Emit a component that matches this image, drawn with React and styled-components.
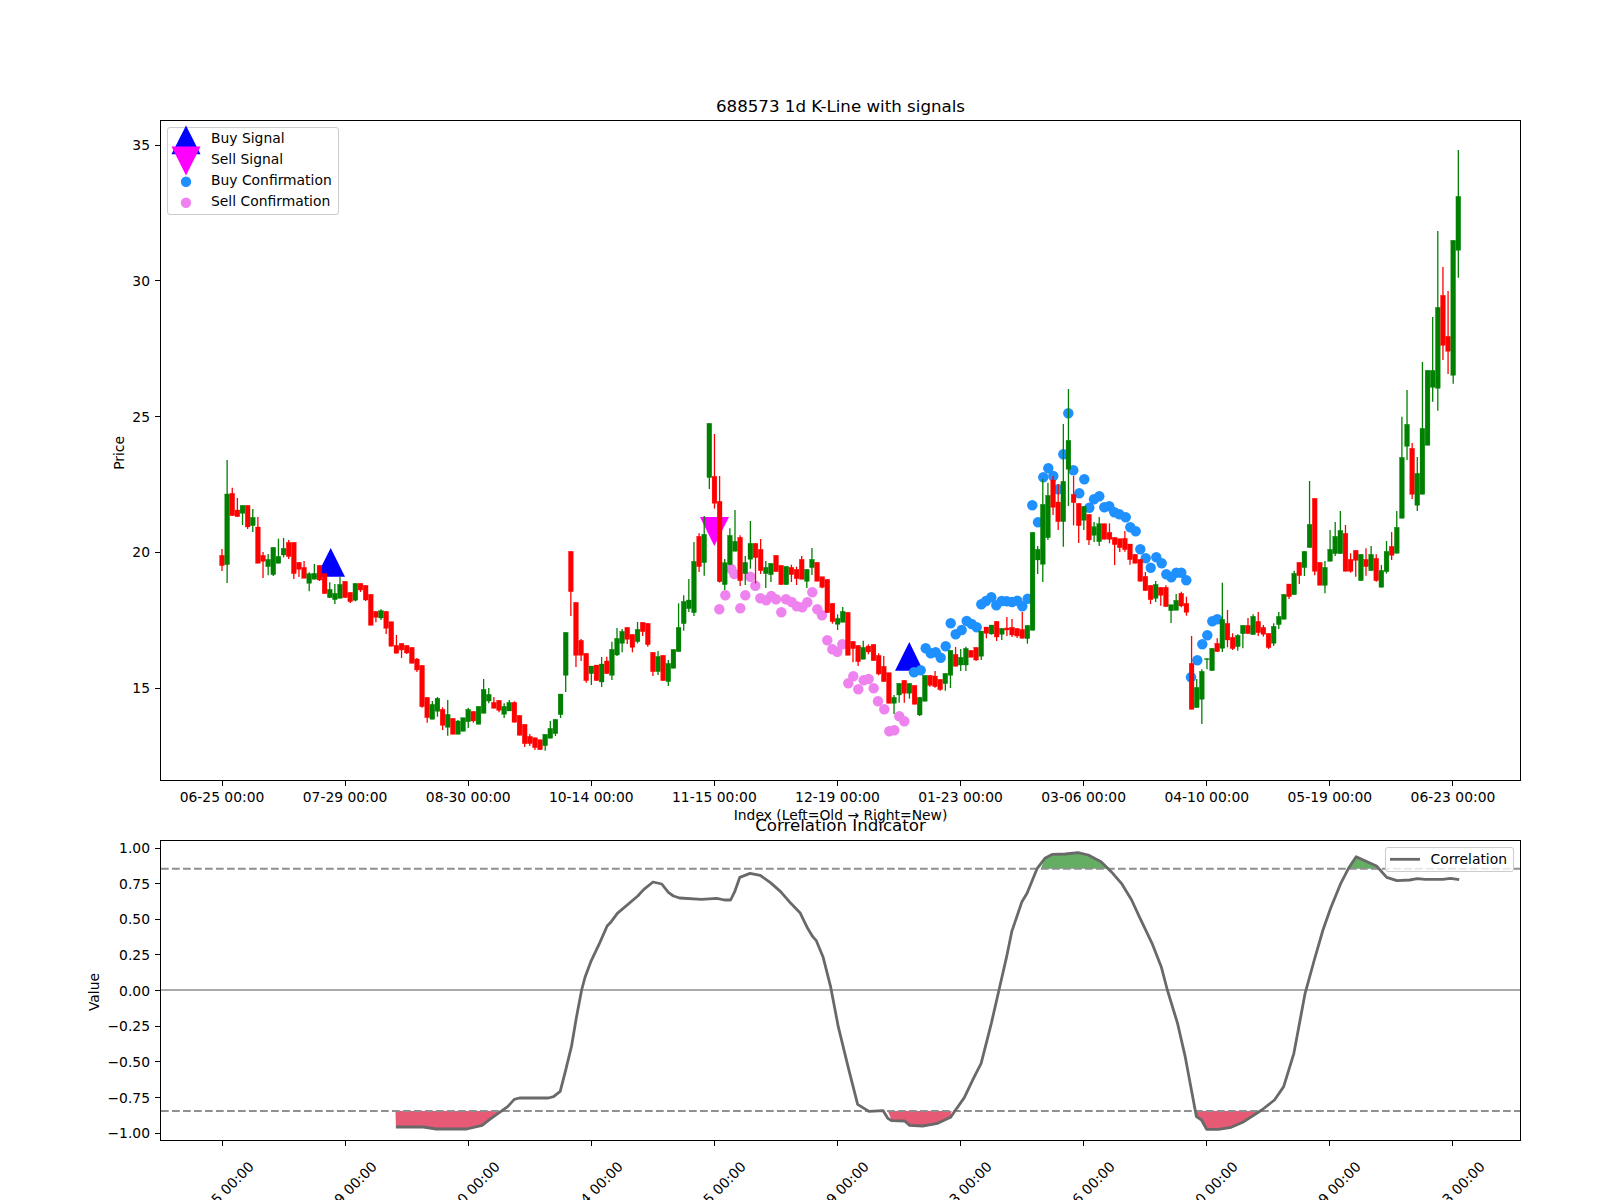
import React from 'react';
import styled, { createGlobalStyle } from 'styled-components';

const GlobalStyle = createGlobalStyle`
  html, body {
    margin: 0;
    background: #fff;
  }

  body {
    width: 1600px;
    height: 1200px;
    overflow: hidden;
    font-family: 'DejaVu Sans', sans-serif;
    color: #000;
  }
`;

// rows: colour, body top, body bottom, wick top, wick bottom (thirds of a pixel below `top`)
const candleGroups = [
  { top: 430, rows: [
    ['r',376,407,357,423],['g',192,404,90,459],['r',190,257,173,257],['r',240,260,204,260],
    ['g',226,250,226,285],['r',226,291,226,297],['g',262,287,237,306],['r',291,400,261,400],
    ['r',376,394,366,444],['g',388,410,372,436],['g',352,434,352,438],['g',379,400,326,400],
    ['g',355,375,324,382],['r',337,380,330,387],['r',337,431,337,447],['r',397,418,397,441],
    ['r',412,445,393,445],['g',431,460,427,484],['g',430,448,402,448],['r',406,450,406,453],
    ['r',431,491],['g',478,503,457,503],['g',490,509,462,522],['g',463,505,440,505],
    ['r',454,503],['r',487,515,487,519],['g',460,511,460,514],['r',460,480,460,486],
    ['r',466,510,466,513],
  ] },
  { top: 590, rows: [
    ['r',13,106],['r',64,82,64,97],['g',62,84,58,90],['r',64,115,64,132],['r',95,169],
    ['r',166,190,135,190],['r',160,180,160,204],['r',166,189,166,192],['r',172,220],
    ['r',207,240,204,246],
  ] },
  { top: 530, rows: [
    ['r',406,530,406,533],['r',502,563,502,578],['g',523,568,513,568],['g',505,544,501,560],
    ['r',538,586,532,600],['g',553,592,510,617],['r',565,613],['g',573,613,570,613],
    ['g',563,604],['g',538,575,533,594],['r',544,573,544,578],['g',529,583],
    ['g',478,550,447,550],['g',493,513,474,520],['r',517,535,501,535],['r',511,541,511,547],
    ['g',529,553,520,564],['g',517,543,510,543],['r',517,577,514,577],['r',556,616],
    ['r',583,641,583,651],['r',619,641,612,648],['r',623,653,623,660],['r',629,659],
    ['g',613,647,613,662],['g',595,625,573,625],['g',568,611,568,618],['g',492,554,492,564],
    ['g',307,436,307,486],['r',64,185,64,258],['r',217,376,217,411],['r',331,376,327,393],
    ['r',370,452,370,458],['g',408,431,408,465],['r',405,452],['g',402,456,381,471],
    ['r',393,431,380,431],['g',358,436,335,450],['g',325,375,294,378],['g',304,340,297,367],
    ['r',292,328,292,342],['r',313,352,313,367],['g',298,335,276,340],
  ] },
  { top: 410, rows: [
    ['r',637,665,637,678],['r',640,704,640,710],['r',727,785,727,798],['g',739,785,723,795],
    ['r',736,812],['g',760,815,750,828],['g',718,775],['g',652,725,580,725],
    ['g',574,641,556,662],['g',570,596,507,606],['g',454,608,396,618],['r',379,470,370,486],
    ['g',373,458,318,497],['g',40,203,40,237],['r',199,280,72,296],['r',274,515,198,518],
    ['g',458,524,447,540],['g',376,464,355,466],['g',394,424,300,424],['r',382,512,376,528],
    ['g',457,491,438,525],['g',400,448,333,476],['r',400,443,400,520],['r',418,482,387,492],
    ['g',472,491,453,534],['g',460,494,460,516],['r',436,485],['r',466,524],['g',469,524],
    ['r',472,494,464,516],['r',478,506,470,525],['r',448,508,438,508],['g',478,514,478,534],
    ['g',448,473,414,495],['r',457,514],['r',500,532,500,535],['r',508,608],
    ['r',580,635,580,641],['g',625,643,613,660],['g',604,637,591,637],['r',607,736],
    ['r',694,716,694,757],['r',706,755,706,768],['g',712,748,692,748],['r',708,726,703,733],
    ['r',703,752],['r',736,792,730,796],
  ] },
  { top: 540, rows: [
    ['r',379,425,348,425],['r',398,490],['g',472,490,465,522],['g',430,465,430,488],
    ['r',421,460,421,488],['g',430,460,430,476],['r',436,493],['g',472,525,472,528],
    ['g',406,484],['r',406,436,406,440],['r',408,440,393,443],['r',418,449,418,452],
    ['g',400,431,400,452],['g',331,406,331,444],['r',343,379,321,379],['g',352,375,327,393],
    ['g',325,375,320,393],['r',331,352],['r',322,360,322,363],['g',273,349,273,360],
    ['r',261,280,261,295],['g',255,282,255,284],['r',244,291,244,303],['g',265,283,265,300],
    ['r',264,270,231,288],['r',262,285,237,291],['r',265,288,265,294],['r',268,295,216,295],
    ['g',256,296,256,311],
  ] },
  { top: 380, rows: [
    ['g',457,751],['g',508,540,498,582],['g',373,553,297,606],['g',346,473,308,480],
    ['r',300,382,288,405],['r',366,425,312,450],['g',304,425,132,500],['g',181,268,27,378],
    ['r',343,368,288,436],['r',370,437,370,489],['g',379,421,379,450],['r',403,480,403,495],
    ['g',440,466,426,486],['g',431,485,411,498],['r',431,478],['r',457,478,430,490],
    ['r',472,494,472,555],['r',476,503,476,516],['r',475,509,453,515],['r',492,539,492,554],
    ['r',523,550],['r',538,604],['r',589,632,576,632],['r',616,659,616,672],
    ['g',613,655,603,666],['r',622,646,622,677],['r',622,680,616,680],['g',674,692,674,729],
    ['g',661,691,642,691],['r',640,678,635,682],['r',670,697,650,707],
  ] },
  { top: 560, rows: [
    ['r',310,448,228,448],['g',382,443,357,443],['g',334,418,328,492],['g',296,299,295,328],
    ['g',265,332],['r',250,275,235,275],['g',178,265,68,276],['r',190,240,150,262],
    ['r',232,266,220,270],['g',226,260,223,272],['g',196,221,196,265],['r',196,221,174,221],
    ['g',169,224,163,224],['r',184,218,156,228],['r',202,223,195,230],['r',220,263,220,267],
    ['g',199,250,190,258],['g',169,194,156,207],
  ] },
  { top: 480, rows: [
    ['g',343,418],['r',312,350,312,357],['g',280,344,272,344],['r',247,287,247,312],
    ['g',214,263,214,288],['g',133,203,3,203],['r',55,274,55,286],['r',247,316],
    ['g',262,316,243,340],['g',208,244,150,244],['g',169,221,126,228],['g',151,221,93,221],
  ] },
  { top: 140, rows: [
    ['r',1180,1294,1155,1294],['r',1258,1294,1240,1298],['r',1231,1261,1231,1310],
    ['g',1243,1322],['r',1258,1280,1225,1307],['g',1243,1292,1218,1292],['r',1255,1322,1243,1325],
    ['g',1291,1342,1275,1342],['g',1234,1295,1203,1301],['r',1219,1246,1176,1260],
    ['g',1162,1240,1113,1240],['g',952,1135,830,1135],['g',853,919,750,960],['r',925,1063,909,1077],
    ['g',1000,1096,951,1113],['g',865,1063,666,1063],['g',691,916],['g',691,742,531,785],
    ['g',502,745,273,812],['r',466,616,381,660],['r',589,634,453,702],['g',301,706,301,731],
    ['g',169,331,30,413],
  ] },
];

const candles = candleGroups
  .flatMap(({ top, rows }) =>
    rows.map(([colour, bodyTop, bodyBottom, wickTop = bodyTop, wickBottom = bodyBottom]) => ({
      colour: colour === 'r' ? '#ff0000' : '#008000',
      bodyTop: top + bodyTop / 3,
      bodyBottom: top + bodyBottom / 3,
      wickTop: top + wickTop / 3,
      wickBottom: top + wickBottom / 3,
    })),
  )
  .map((candle, index) => ({ ...candle, x: 222 + 5.13 * index }));

const sellDots = [
  [719.3,609.3],[725.3,595.3],[731.3,569],[734.3,574],[740.3,608.3],[745.3,595.3],[750.3,576.7],
  [755.3,585.7],[760.3,598.3],[766.3,600.3],[771.3,596],[776,599.3],[781.3,612.3],[786,599.3],
  [791.7,602],[796.7,606.3],[802.3,607.3],[807.3,602.3],[812.3,592.3],[817.3,609.3],[822,615.3],
  [827.3,640.3],[832.3,649.3],[837.3,651.7],[842.3,644.3],[848.3,683.3],[853.3,676.3],[858.3,689.3],
  [863.7,680.3],[868.7,679],[873.7,688.3],[878,701.3],[884.3,709.3],[889.3,731.3],[894.3,730.3],
  [899.3,716.3],[904.3,721.3],
];

const buyDots = [
  [914,672.3],[920.7,670.3],[925.7,648.3],[930.7,653.3],[935.7,652.3],[940.7,657.7],[945.7,646.3],
  [950.7,623.3],[955.7,634.3],[961.7,630],[966.7,621],[971.7,624],[976.7,627.3],[981.3,604.3],
  [986,601],[991.3,597.3],[996.3,605.3],[1001.7,601],[1006.7,601.3],[1012,602],[1017.3,600.7],
  [1022.3,606.3],[1027.7,598.7],[1032.3,505.3],[1038,522.3],[1043.3,477.3],[1048.3,468.3],
  [1053.3,476],[1058.3,489.3],[1063.3,454.3],[1068.3,413.3],[1073.3,470.3],[1079.3,493.3],
  [1084.3,479.3],[1089.3,507.7],[1094,499.3],[1099.3,496.3],[1104.3,507.3],[1109.3,506.3],
  [1114.3,512.3],[1119.3,514.3],[1125.7,517.3],[1130.3,527.3],[1135.7,531.3],[1140.3,549.3],
  [1145.7,558.3],[1150.7,567.7],[1156.3,557.3],[1161.7,563.3],[1166.3,574.3],[1171.3,577.3],
  [1176.3,572.7],[1181.3,572.7],[1186.3,580.3],[1191,677.3],[1197.3,660.3],[1202.3,644.3],
  [1207.3,635.3],[1212.3,621.3],[1217.3,619.3],
];

const oldHalf = [
  [776,1101],[800,1101],[830,1101],[855,1107],[915,1107],[945,1096],[960,1078],[995,1040],[1008,1018],
  [1018,1014],[1075,1014],[1085,1010],[1098,994],[1108,935],[1120,860],[1130,770],[1140,690],[1147,650],
  [1158,605],[1175,550],[1190,498],[1198,485],[1210,460],[1250,408],[1262,388],[1280,366],[1297,372],
  [1310,397],[1320,408],[1332,414],[1375,418],[1405,415],[1420,420],[1432,420],[1440,395],[1450,352],
  [1470,340],[1490,346],[1510,368],[1530,395],[1550,430],
];

const newHalf = [
  [0,458],[15,505],[25,530],[32,542],[45,590],[60,680],[75,800],[95,925],[113,1033],[135,1054],[163,1052],
  [172,1075],[180,1082],[205,1083],[215,1096],[240,1098],[270,1090],[295,1072],[305,1050],[322,1013],
  [340,955],[355,910],[375,790],[390,690],[405,590],[415,515],[435,425],[445,400],[465,325],[480,295],
  [495,283],[520,282],[545,278],[565,285],[590,305],[610,335],[630,370],[650,420],[665,470],[690,550],
  [708,620],[720,690],[740,790],[755,890],[777,1070],[787,1080],[797,1108],[820,1108],[845,1102],
  [870,1085],[905,1050],[930,1020],[948,980],[968,880],[990,700],[1008,600],[1025,510],[1040,445],
  [1060,370],[1075,325],[1090,290],[1130,318],[1150,352],[1170,362],[1195,360],[1210,356],[1225,358],
  [1260,358],[1275,355],[1292,359],
];

const correlation = [
  ...oldHalf.map(([x, y]) => [x / 1.96, 760 + y / 3]),
  ...newHalf.map(([x, y]) => [800 + x / 1.96, 760 + y / 3]),
];

const UPPER = 868.7;
const LOWER = 1111;

const bands = [
  { from: 395.5, to: 501.5, level: LOWER, fill: '#e65a75' },
  { from: 887.8, to: 951.5, level: LOWER, fill: '#e65a75' },
  { from: 1040.8, to: 1107, level: UPPER, fill: '#63ae63' },
  { from: 1196.4, to: 1261.7, level: LOWER, fill: '#e65a75' },
  { from: 1348.5, to: 1377.6, level: UPPER, fill: '#63ae63' },
];

const toPoints = (points) => points.map((point) => point.join(',')).join(' ');

const bandPoints = ({ from, to, level }) =>
  toPoints([
    [from, level],
    ...correlation.filter(([x]) => x > from && x < to),
    [to, level],
  ]);

const dateLabels = [
  '06-25 00:00', '07-29 00:00', '08-30 00:00', '10-14 00:00', '11-15 00:00', '12-19 00:00',
  '01-23 00:00', '03-06 00:00', '04-10 00:00', '05-19 00:00', '06-23 00:00',
];
const priceLabels = ['35', '30', '25', '20', '15'];
const valueLabels = ['1.00', '0.75', '0.50', '0.25', '0.00', '−0.25', '−0.50', '−0.75', '−1.00'];

const Figure = styled.main`
  width: 1600px;
  height: 1200px;
  box-sizing: border-box;
  padding: 95px 79px 0 0;
  font-size: 13.89px;
  line-height: 16px;
`;

const Title = styled.h2`
  margin: ${(p) => (p.$overlap ? '-7px 0 4px' : '0 0 2px')};
  padding-left: 160px;
  font-size: 16.67px;
  font-weight: 400;
  line-height: ${(p) => (p.$overlap ? '20px' : '23px')};
  text-align: center;
`;

const Panel = styled.section`
  display: grid;
  grid-template-columns: 160px 1361px;
  height: ${(p) => p.$height}px;
`;

const Gutter = styled.div`
  display: flex;
  justify-content: flex-end;
`;

const YLabel = styled.div`
  align-self: center;
  margin: 4px ${(p) => p.$gap}px 0 0;
  writing-mode: vertical-rl;
  transform: rotate(180deg);
`;

const YTicks = styled.div`
  display: flex;
  flex-direction: column;
  gap: ${(p) => p.$step}px;
  width: ${(p) => p.$width}px;
  padding-top: ${(p) => p.$first}px;
`;

const YTick = styled.div`
  display: flex;
  justify-content: flex-end;
  align-items: center;
  height: 0;
  white-space: nowrap;

  &::after {
    content: '';
    flex: none;
    width: 5px;
    height: 1px;
    margin-left: 5px;
    background: #000;
  }
`;

const Plot = styled.div`
  position: relative;
  box-sizing: border-box;
  border: 1px solid #000;
`;

const PlotArea = styled.svg`
  display: block;
  width: 100%;
  height: 100%;
`;

const Legend = styled.div`
  position: absolute;
  top: ${(p) => p.$top}px;
  ${(p) => (p.$right ? `right: ${p.$right}px;` : `left: ${p.$left}px;`)}
  box-sizing: border-box;
  padding: ${(p) => p.$padding};
  background: rgba(255, 255, 255, 0.8);
  border: 1px solid #ccc;
  border-radius: 3px;
`;

const LegendRow = styled.div`
  display: flex;
  align-items: center;
  height: 21px;
  gap: 10px;
  white-space: nowrap;
`;

const SignalRows = styled.div`
  margin-top: -1px;
`;

const LegendMark = styled.svg`
  flex: none;
  width: 30px;
  height: 21px;
  overflow: visible;
`;

const XRow = styled.div`
  display: flex;
  gap: 123.1px;
  height: ${(p) => p.$height}px;
  margin-left: 160px;
  padding-left: 62px;
`;

const XTick = styled.div`
  display: flex;
  flex-direction: column;
  align-items: center;
  width: 0;
  white-space: nowrap;

  &::before {
    content: '';
    flex: none;
    width: 1px;
    height: 5px;
    margin-bottom: ${(p) => p.$offset}px;
    background: #000;
  }
`;

const TickText = styled.span`
  transform: ${(p) => (p.$rotated ? 'translateX(-1px) rotate(-45deg)' : 'none')};
`;

const XLabel = styled.div`
  margin-top: 3px;
  padding-left: 160px;
  text-align: center;
`;

function PriceChart() {
  return (
    <PlotArea viewBox="161 121 1359 659">
      <polygon points="330.7,548 345,576.7 316.3,576.7" fill="#0000ff" />
      <polygon points="700,517 729,517 714.3,546" fill="#ff00ff" />
      <polygon points="909.3,642 923.3,670.7 895,670.7" fill="#0000ff" />
      {sellDots.map(([x, y]) => (
        <circle key={x} cx={x} cy={y} r="5.2" fill="#ee82ee" />
      ))}
      {buyDots.map(([x, y]) => (
        <circle key={x} cx={x} cy={y} r="5.2" fill="#1e90ff" />
      ))}
      {candles.map((c) => (
        <g key={c.x} fill={c.colour} stroke={c.colour}>
          <line x1={c.x} x2={c.x} y1={c.wickTop} y2={c.wickBottom} strokeWidth="1.3" />
          <rect
            x={c.x - 2.4}
            y={c.bodyTop}
            width="4.8"
            height={c.bodyBottom - c.bodyTop}
            strokeWidth="0.3"
          />
        </g>
      ))}
    </PlotArea>
  );
}

function CorrelationChart() {
  return (
    <PlotArea viewBox="161 841 1359 299">
      {bands.map((band) => (
        <polygon key={band.from} points={bandPoints(band)} fill={band.fill} />
      ))}
      <line x1="161" x2="1520" y1="990" y2="990" stroke="#aaa" strokeWidth="2" />
      <line x1="161" x2="1520" y1={UPPER} y2={UPPER} stroke="#8f8f8f" strokeWidth="2" strokeDasharray="7.7 3.3" />
      <line x1="161" x2="1520" y1={LOWER} y2={LOWER} stroke="#8f8f8f" strokeWidth="2" strokeDasharray="7.7 3.3" />
      <polyline points={toPoints(correlation)} fill="none" stroke="#696969" strokeWidth="2.8" strokeLinejoin="round" />
    </PlotArea>
  );
}

export default function App() {
  return (
    <>
      <GlobalStyle />
      <Figure>
        <Title>688573 1d K-Line with signals</Title>
        <Panel $height={661}>
          <Gutter>
            <YLabel $gap={1}>Price</YLabel>
            <YTicks $width={32} $first={25} $step={135.75}>
              {priceLabels.map((label) => (
                <YTick key={label}>{label}</YTick>
              ))}
            </YTicks>
          </Gutter>
          <Plot>
            <PriceChart />
            <Legend $top={6} $left={6} $padding="0 6px 3px 3px">
              <SignalRows>
                <LegendRow>
                  <LegendMark viewBox="-15 -10.5 30 21">
                    <polygon points="0,-12 14.5,16.7 -14.5,16.7" fill="#0000ff" />
                  </LegendMark>
                  Buy Signal
                </LegendRow>
                <LegendRow>
                  <LegendMark viewBox="-15 -10.5 30 21">
                    <polygon points="-14.5,-12 14.5,-12 0,17" fill="#ff00ff" />
                  </LegendMark>
                  Sell Signal
                </LegendRow>
                <LegendRow>
                  <LegendMark viewBox="-15 -10.5 30 21">
                    <circle cy="2.3" r="5.2" fill="#1e90ff" />
                  </LegendMark>
                  Buy Confirmation
                </LegendRow>
                <LegendRow>
                  <LegendMark viewBox="-15 -10.5 30 21">
                    <circle cy="2.3" r="5.2" fill="#ee82ee" />
                  </LegendMark>
                  Sell Confirmation
                </LegendRow>
              </SignalRows>
            </Legend>
          </Plot>
        </Panel>
        <XRow $height={23}>
          {dateLabels.map((label) => (
            <XTick key={label} $offset={3}>
              <TickText>{label}</TickText>
            </XTick>
          ))}
        </XRow>
        <XLabel>Index (Left=Old → Right=New)</XLabel>
        <Title $overlap>Correlation Indicator</Title>
        <Panel $height={301}>
          <Gutter>
            <YLabel $gap={2}>Value</YLabel>
            <YTicks $width={56} $first={8} $step={35.67}>
              {valueLabels.map((label) => (
                <YTick key={label}>{label}</YTick>
              ))}
            </YTicks>
          </Gutter>
          <Plot>
            <CorrelationChart />
            <Legend $top={6} $right={6} $padding="0 6px 2px 4px">
              <LegendRow>
                <LegendMark viewBox="0 0 30 21">
                  <line x1="0" x2="30" y1="11.3" y2="11.3" stroke="#696969" strokeWidth="2.8" />
                </LegendMark>
                Correlation
              </LegendRow>
            </Legend>
          </Plot>
        </Panel>
        <XRow $height={59}>
          {dateLabels.map((label) => (
            <XTick key={label} $offset={40}>
              <TickText $rotated>{label}</TickText>
            </XTick>
          ))}
        </XRow>
      </Figure>
    </>
  );
}
